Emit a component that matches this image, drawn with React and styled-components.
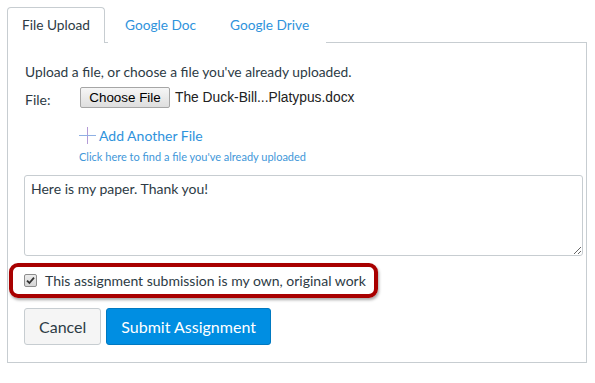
import React from 'react'
import styled, { createGlobalStyle } from 'styled-components'

const GlobalStyle = createGlobalStyle`
  html, body {
    margin: 0;
    padding: 0;
    background: #ffffff;
  }
  body {
    font-family: Lato, "Open Sans", "Liberation Sans", sans-serif;
    color: #2d3b45;
  }
`

const Page = styled.div`
  padding: 7px 8px 0 7px;
  width: 580px;
`

const TabList = styled.div`
  display: flex;
  height: 35px;
  position: relative;
  z-index: 1;
`

const Tab = styled.div`
  display: flex;
  align-items: center;
  box-sizing: border-box;
  height: 36px;
  padding: 0 ${(p) => (p.active ? '14px' : '16px')} 2px;
  font-size: 13.7px;
  color: ${(p) => (p.active ? '#2d3b45' : '#2f93dc')};
  background: #fff;
  border: 1px solid ${(p) => (p.active ? '#c7cdd1' : 'transparent')};
  border-bottom: none;
  border-radius: 4px 4px 0 0;
  margin-right: ${(p) => (p.active ? '3px' : '0')};
  width: ${(p) => (p.active ? '98px' : 'auto')};
  justify-content: center;
`

const Panel = styled.div`
  box-sizing: border-box;
  border: 1px solid #c7cdd1;
  height: 321px;
  padding: 20px 3px 0 16px;
  display: flex;
  flex-direction: column;
`

const Intro = styled.div`
  font-size: 13.8px;
  line-height: 18px;
  margin-left: 1px;
`

const FileRow = styled.div`
  display: flex;
  align-items: center;
  margin-top: 6px;
  height: 21px;
`

const FileLabel = styled.span`
  width: 55px;
  margin-left: 1px;
  font-size: 14px;
  padding-top: 4px;
`

const ChooseButton = styled.button`
  box-sizing: border-box;
  height: 21px;
  width: 90px;
  padding: 0;
  font-family: "Liberation Sans", Arial, sans-serif;
  font-size: 13.4px;
  color: #000;
  background: linear-gradient(#f6f6f6, #dedede);
  border: 1px solid #a6a6a6;
  border-radius: 2px;
`

const FileName = styled.span`
  font-family: "Liberation Sans", Arial, sans-serif;
  font-size: 13.8px;
  color: #222;
  margin-left: 5px;
`

const Indented = styled.div`
  margin-left: 55px;
  display: flex;
  flex-direction: column;
`

const AddLink = styled.div`
  display: flex;
  align-items: center;
  margin-top: 19px;
  font-size: 14px;
  color: #2f93dc;
  gap: 3px;
`

const FindLink = styled.div`
  margin-top: 6px;
  font-size: 11px;
  color: #3f97d9;
`

const Comment = styled.textarea`
  box-sizing: border-box;
  margin-top: 12px;
  width: 100%;
  height: 81px;
  border: 1px solid #c7cdd1;
  border-radius: 3px;
  padding: 4px 6px;
  font-family: Lato, "Open Sans", sans-serif;
  font-size: 14px;
  color: #2d3b45;
  resize: both;
  outline: none;
`

const Highlight = styled.label`
  align-self: flex-start;
  display: flex;
  align-items: center;
  gap: 8px;
  box-sizing: border-box;
  height: 35px;
  margin: 7px 0 0 -15px;
  padding: 0 8px 0 11px;
  border: 4px solid #a80000;
  border-radius: 9px;
  box-shadow: 1px 2px 3px rgba(0, 0, 0, 0.35);
  font-size: 14px;
  color: #2d3b45;
`

const CheckBox = styled.span`
  box-sizing: border-box;
  width: 13px;
  height: 13px;
  border: 1px solid #8d8d8d;
  border-radius: 2px;
  background: linear-gradient(#ececec, #d6d6d6);
  display: flex;
  align-items: center;
  justify-content: center;
`

const Actions = styled.div`
  display: flex;
  gap: 5px;
  margin-top: 10px;
`

const Button = styled.button`
  box-sizing: border-box;
  height: 37px;
  padding: 0 14px;
  font-family: Lato, "Open Sans", sans-serif;
  font-size: 16px;
  color: ${(p) => (p.primary ? '#ffffff' : '#2d3b45')};
  background: ${(p) => (p.primary ? '#008ee2' : '#f5f5f5')};
  border: 1px solid ${(p) => (p.primary ? '#0079c1' : '#c7cdd1')};
  border-radius: 3px;
`

const PlusIcon = () => (
  <svg width="17" height="17" viewBox="0 0 17 17">
    <line x1="8.5" y1="0" x2="8.5" y2="17" stroke="#b39bd6" strokeWidth="1" />
    <line x1="0" y1="8.5" x2="17" y2="8.5" stroke="#8fb0e4" strokeWidth="1" />
  </svg>
)

const CheckMark = () => (
  <svg width="9" height="9" viewBox="0 0 9 9">
    <path d="M1 4.6 L3.4 7 L8 1.6" fill="none" stroke="#333" strokeWidth="1.8" />
  </svg>
)

export default function App() {
  return (
    <Page>
      <GlobalStyle />
      <TabList>
        <Tab active>File Upload</Tab>
        <Tab>Google Doc</Tab>
        <Tab>Google Drive</Tab>
      </TabList>
      <Panel>
        <Intro>Upload a file, or choose a file you've already uploaded.</Intro>
        <FileRow>
          <FileLabel>File:</FileLabel>
          <ChooseButton>Choose File</ChooseButton>
          <FileName>The Duck-Bill...Platypus.docx</FileName>
        </FileRow>
        <Indented>
          <AddLink>
            <PlusIcon />
            Add Another File
          </AddLink>
          <FindLink>Click here to find a file you've already uploaded</FindLink>
        </Indented>
        <Comment defaultValue="Here is my paper. Thank you!" />
        <Highlight>
          <CheckBox>
            <CheckMark />
          </CheckBox>
          This assignment submission is my own, original work
        </Highlight>
        <Actions>
          <Button>Cancel</Button>
          <Button primary>Submit Assignment</Button>
        </Actions>
      </Panel>
    </Page>
  )
}
